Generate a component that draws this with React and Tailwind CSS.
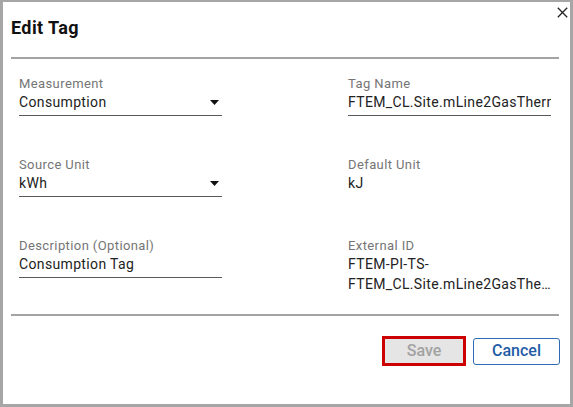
import React from "react";

function Caret() {
  return (
    <svg width="9" height="5" viewBox="0 0 9 5" className="shrink-0">
      <polygon points="0,0 9,0 4.5,5" fill="#111" />
    </svg>
  );
}

function Field({ label, value, select, underline = true, width = "w-[203px]" }) {
  return (
    <div className={`${width} flex flex-col`}>
      <div className="text-[13px] leading-[17px] tracking-[0.4px] text-[#757575] whitespace-nowrap">{label}</div>
      <div
        className={`mt-px pb-[4px] flex items-center border-b ${underline ? "border-[#5a5a5a]" : "border-transparent"}`}
      >
        <div className="flex-1 min-w-0 overflow-hidden whitespace-nowrap text-[14px] leading-[18px] tracking-[0.35px] text-[#222]">
          {value}
        </div>
        {select && (
          <div className="pr-[3px] pl-1 flex items-center">
            <Caret />
          </div>
        )}
      </div>
    </div>
  );
}

export default function App() {
  return (
    <div className="w-[573px] h-[407px] bg-white border-[#a6a6a6] border-l-[3px] border-t-[2px] border-r-[3px] border-b-[3px] relative font-['Roboto',sans-serif] box-border">
      <button className="absolute right-[2px] top-[4px] w-[12px] h-[12px] flex items-center justify-center">
        <svg width="11" height="11" viewBox="0 0 11 11">
          <path d="M0.8 0.8 L10.2 10.2 M10.2 0.8 L0.8 10.2" stroke="#222" strokeWidth="1.3" fill="none" />
        </svg>
      </button>
      <div className="pt-[15px] pl-[8px] text-[18px] leading-[21px] tracking-[0.4px] font-bold text-[#111]">Edit Tag</div>
      <div className="mt-[19px] ml-[8px] w-[548px] h-[2px] bg-[#a3a3a3]" />
      <div className="mt-[16px] pl-[16px] flex">
        <div className="w-[329px] flex flex-col gap-[40px]">
          <Field label="Measurement" value="Consumption" select />
          <Field label="Source Unit" value="kWh" select />
          <Field label="Description (Optional)" value="Consumption Tag" />
        </div>
        <div className="w-[220px] flex flex-col gap-[40px]">
          <Field label="Tag Name" value="FTEM_CL.Site.mLine2GasTherms" />
          <Field label="Default Unit" value="kJ" underline={false} />
          <div className="w-[207px] flex flex-col">
            <div className="text-[13px] leading-[17px] tracking-[0.4px] text-[#757575]">External ID</div>
            <div className="text-[14px] leading-[20px] tracking-[0.35px] text-[#222]">FTEM-PI-TS-</div>
            <div className="text-[14px] leading-[20px] tracking-[0.35px] text-[#222] truncate">FTEM_CL.Site.mLine2GasTherms</div>
          </div>
        </div>
      </div>
      <div className="mt-[20px] ml-[8px] w-[548px] h-[2px] bg-[#a3a3a3]" />
      <div className="mt-[20px] pr-[10px] flex justify-end items-center gap-[7px]">
        <button className="w-[84px] h-[30px] border-[3px] border-[#cc0000] bg-[#e5e5e5] text-[#a2a2a2] text-[16px] font-medium leading-none flex items-center justify-center">
          Save
        </button>
        <button className="w-[87px] h-[27px] border border-[#2f6bb3] rounded-[3px] bg-white text-[#1f5ca6] text-[16px] font-medium leading-none flex items-center justify-center">
          Cancel
        </button>
      </div>
    </div>
  );
}
